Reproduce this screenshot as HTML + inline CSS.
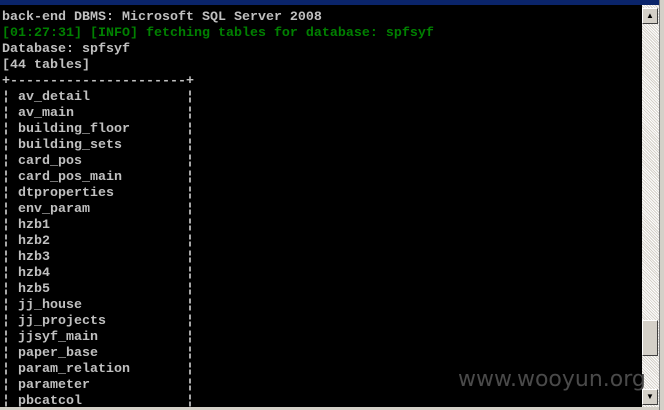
<html><head><style>
body{margin:0;width:664px;height:410px;overflow:hidden;background:#d4d0c8;position:relative}
.title{position:absolute;left:0;top:0;width:664px;height:5px;background:#0a246a}
.con{position:absolute;left:0;top:5px;width:642px;height:402px;background:#000;overflow:hidden}
pre{margin:0;position:absolute;left:2px;top:5px;font-family:"Liberation Mono",monospace;font-weight:bold;font-size:13.33px;line-height:16px;color:#c0c0c0}
.g{color:#008000}
.sb{position:absolute;left:642px;top:5px;width:17px;height:402px;background:#ecebe6;background-image:repeating-linear-gradient(45deg,#fff 0 1px,#d4d0c8 1px 2px)}
.btn{position:absolute;left:0;width:16px;height:16px;background:#d4d0c8;border-top:1px solid #fff;border-left:1px solid #fff;border-right:1px solid #404040;border-bottom:1px solid #404040;box-sizing:border-box}
.rb{position:absolute;left:659px;top:0;width:5px;height:410px;background:#d4d0c8;border-left:1px solid #808080}
.wm{position:absolute;left:458px;top:367px;font-family:"DejaVu Sans","Liberation Sans",sans-serif;font-size:22px;color:#4a4a4a;white-space:nowrap}
</style></head><body>
<div class="title"></div>
<div class="con"><pre>back-end DBMS: Microsoft SQL Server 2008
<span class="g">[01:27:31] [INFO] fetching tables for database: spfsyf</span>
Database: spfsyf
[44 tables]
+----------------------+
¦ av_detail            ¦
¦ av_main              ¦
¦ building_floor       ¦
¦ building_sets        ¦
¦ card_pos             ¦
¦ card_pos_main        ¦
¦ dtproperties         ¦
¦ env_param            ¦
¦ hzb1                 ¦
¦ hzb2                 ¦
¦ hzb3                 ¦
¦ hzb4                 ¦
¦ hzb5                 ¦
¦ jj_house             ¦
¦ jj_projects          ¦
¦ jjsyf_main           ¦
¦ paper_base           ¦
¦ param_relation       ¦
¦ parameter            ¦
¦ pbcatcol             ¦</pre></div>
<div class="sb">
<div class="btn" style="top:3px;font-size:8px;text-align:center;line-height:14px">▲</div>
<div class="btn" style="top:315px;height:36px"></div>
<div class="btn" style="top:384px;font-size:8px;text-align:center;line-height:14px">▼</div>
</div>
<div class="rb"></div>
<div class="wm">www.wooyun.org</div>
</body></html>
